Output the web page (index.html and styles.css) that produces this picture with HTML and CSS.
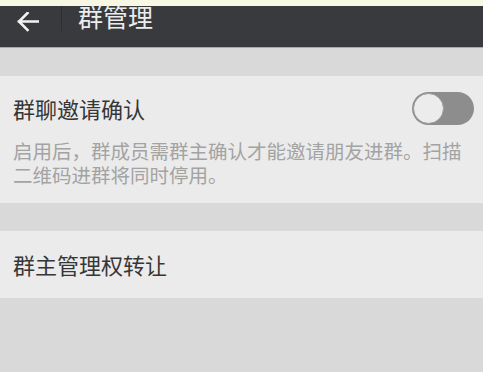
FILE: index.html
```html
<!DOCTYPE html>
<html lang="zh-CN">
<head>
<meta charset="utf-8">
<title>群管理</title>
<link rel="stylesheet" href="styles.css">
</head>
<body>
<div class="status"></div>
<header class="header">
  <svg class="back" width="22" height="20" viewBox="0 0 22 20" aria-hidden="true">
    <path d="M21.5 9.5H2 M10.5 1L2 9.5L10.5 18" fill="none" stroke="#f2f2f2" stroke-width="2.6" stroke-linecap="square" stroke-linejoin="miter"/>
  </svg>
  <span class="divider"></span>
  <h1 class="title">群管理</h1>
</header>
<main class="content">
  <section class="card card-invite">
    <div class="row">
      <span class="label">群聊邀请确认</span>
      <span class="toggle"><span class="knob"></span></span>
    </div>
    <p class="desc">启用后，群成员需群主确认才能邀请朋友进群。扫描二维码进群将同时停用。</p>
  </section>
  <section class="card card-transfer">
    <span class="label">群主管理权转让</span>
  </section>
</main>
</body>
</html>
```

FILE: styles.css
```css
html, body {
  margin: 0;
  padding: 0;
}
body {
  background: #d9d9d9;
  font-family: "Noto Sans CJK SC", "Noto Sans", sans-serif;
  width: 483px;
  height: 372px;
  overflow: hidden;
}
.status {
  height: 6px;
  background: #f7f7e3;
}
.header {
  height: 41px;
  background: #393a3e;
  border-bottom: 1px solid #aaaaaa;
  display: flex;
  align-items: flex-start;
}
.back {
  display: block;
  margin-left: 17px;
  margin-top: 6px;
}
.divider {
  width: 1px;
  height: 25px;
  background: #2d2e32;
  margin-left: 22px;
}
.title {
  margin: 0 0 0 16px;
  font-size: 25px;
  font-weight: normal;
  line-height: 21px;
  color: #ececec;
}
.content {
  padding-top: 28px;
  display: flex;
  flex-direction: column;
  gap: 28px;
}
.card {
  background: #ebebeb;
}
.card-invite {
  padding: 16px 9px 16px 13px;
}
.row {
  display: flex;
  align-items: center;
  justify-content: space-between;
  height: 33px;
}
.label {
  font-size: 22px;
  color: #363636;
  line-height: 33px;
}
.toggle {
  width: 62px;
  height: 33px;
  border-radius: 17px;
  background: #8d8d8d;
  box-sizing: border-box;
  padding: 1px;
  display: flex;
  align-items: center;
}
.knob {
  width: 31px;
  height: 31px;
  border-radius: 50%;
  background: #ececec;
  box-sizing: border-box;
  border: 1px solid #9a9a9a;
}
.desc {
  margin: 14px 6px 0 0;
  font-size: 19.5px;
  line-height: 24px;
  color: #a3a3a3;
}
.card-transfer {
  height: 67px;
  display: flex;
  align-items: center;
  padding-left: 13px;
}
```
